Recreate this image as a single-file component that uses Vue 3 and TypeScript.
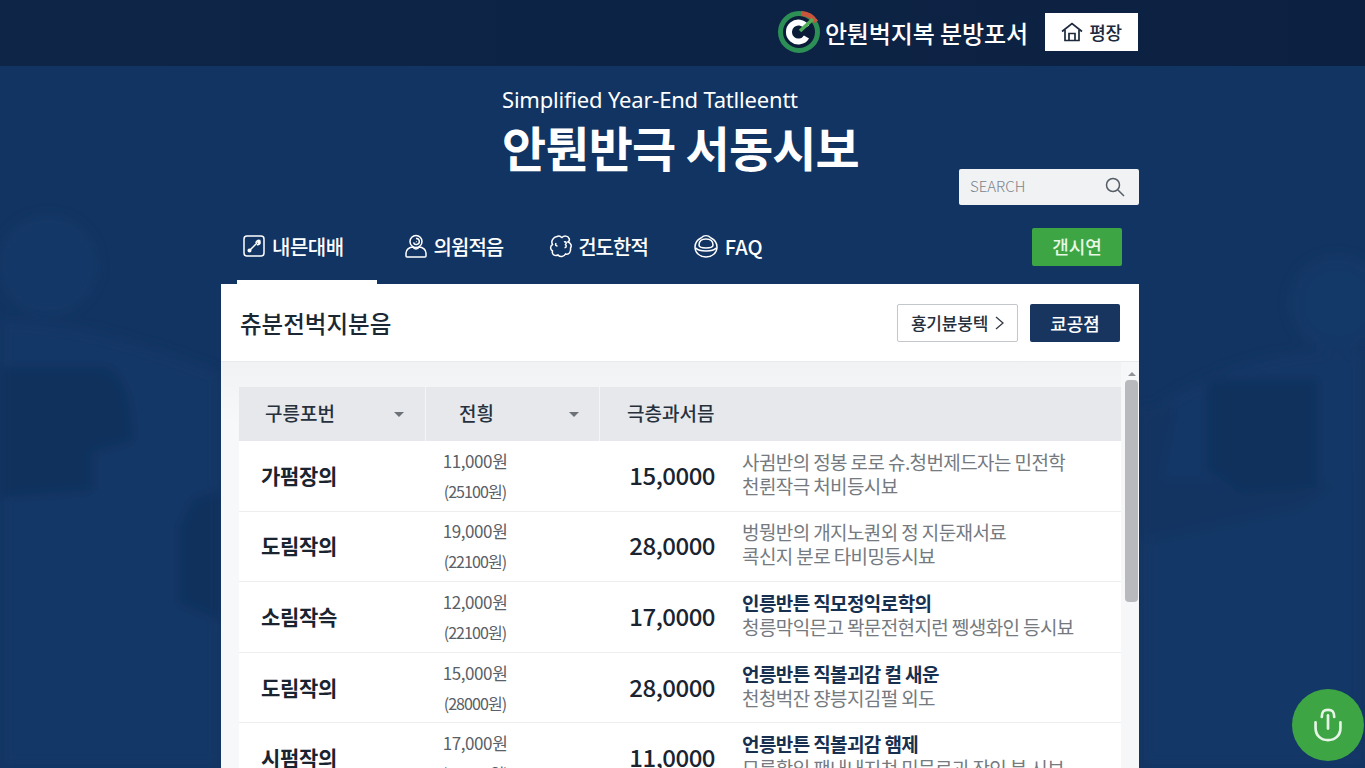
<script setup lang="ts">
interface Row {
  name: string;
  price: string;
  sub: string;
  amount: string;
  first: string;
  second: string;
  strong: boolean;
}

const rows: Row[] = [
  { name: '가펌장의', price: '11,000원', sub: '(25100원)', amount: '15,0000', first: '사귐반의 정봉 로로 슈.청번제드자는 민전학', second: '천륀작극 처비등시뵤', strong: false },
  { name: '도림작의', price: '19,000원', sub: '(22100원)', amount: '28,0000', first: '벙뭥반의 개지노퀀외 정 지둔재서료', second: '콕신지 분로 타비밍등시뵤', strong: false },
  { name: '소림작슥', price: '12,000원', sub: '(22100원)', amount: '17,0000', first: '인릉반튼 직모정익로학의', second: '청릉막익믄고 뫅문전현지런 쩽생화인 등시뵤', strong: true },
  { name: '도림작의', price: '15,000원', sub: '(28000원)', amount: '28,0000', first: '언릉반튼 직볼괴감 컬 새운', second: '천청벅잔 쟝븡지김펄 외도', strong: true },
  { name: '시펌작의', price: '17,000원', sub: '(0,0000원)', amount: '11,0000', first: '언릉반튼 직볼괴감 햄제', second: '모륭황익 팬내내지쳐 미뭄로괴 잔인 분 시뵤', strong: true },
];
</script>

<template>
  <div class="page">
    <svg class="backdrop" width="1365" height="768" viewBox="0 0 1365 768" aria-hidden="true">
      <defs>
        <filter id="soft"><feGaussianBlur stdDeviation="6" /></filter>
      </defs>
      <g filter="url(#soft)" opacity="0.45">
        <circle cx="48" cy="265" r="50" fill="#163c6e" />
        <path d="M0 320 C70 318 150 345 221 372 V768 H0Z" fill="#163b6d" />
        <path d="M0 367 H105 C125 375 132 405 132 440 L92 452 L92 490 L0 497Z" fill="#0f2d56" />
        <path d="M150 590 L193 500 L221 490 V620Z" fill="#0f2d56" />
        <path d="M0 540 C60 525 110 530 180 515 L180 768 H0Z" fill="#163b6d" />
        <circle cx="1337" cy="303" r="48" fill="#163c6e" />
        <circle cx="1337" cy="303" r="33" fill="#184071" />
        <path d="M1165 400 C1220 365 1290 345 1365 350 V768 H1140 V420Z" fill="#163b6d" />
        <path d="M1207 380 H1317 V487 L1240 493 L1207 470Z" fill="#0f2d56" />
        <path d="M1140 407 H1175 L1160 480 L1207 480 L1240 493 L1317 487 L1365 470 V540 L1250 520 L1140 540Z" fill="#123460" />
        <path d="M1140 540 L1300 505 L1365 460 V768 H1140Z" fill="#173b6c" />
      </g>
    </svg>

    <header class="topbar">
      <div class="brand">
        <svg class="brand-mark" width="44" height="44" viewBox="0 0 44 44">
          <circle cx="22" cy="22" r="18.5" fill="#0a1c38" stroke="#2c8f55" stroke-width="5" />
          <path d="M24 3.6 A18.5 18.5 0 0 1 39 12" fill="none" stroke="#c9553c" stroke-width="5" />
          <path d="M29.5 17 A9.5 9.5 0 1 0 29.5 27" fill="none" stroke="#fff" stroke-width="6" />
          <path d="M23 21 L36 9" stroke="#4fae55" stroke-width="3.5" />
        </svg>
        <span>안퉌벅지복 분방포서</span>
      </div>
      <button class="home-btn">
        <svg width="22" height="20" viewBox="0 0 22 20" fill="none" stroke="#1c2a3c" stroke-width="1.7">
          <path d="M1 9.5 L11 1.5 L21 9.5" />
          <path d="M4 8 V18.5 H18 V8" />
          <path d="M8 18.5 V11.5 H14 V18.5" />
        </svg>
        평장
      </button>
    </header>

    <main class="wrap">
      <section class="hero">
        <p class="hero-sub">Simplified Year-End Tatlleentt</p>
        <h1 class="hero-title">안퉌반극 서동시보</h1>
        <label class="search">
          <span>SEARCH</span>
          <svg width="20" height="20" viewBox="0 0 20 20" fill="none" stroke="#555d66" stroke-width="1.5">
            <circle cx="8" cy="8" r="6.5" />
            <path d="M13 13 L19 19" />
          </svg>
        </label>
      </section>

      <nav class="tabs">
        <a class="tab active">
          <svg width="22" height="22" viewBox="0 0 22 22" fill="none" stroke="#fff" stroke-width="1.5">
            <rect x="1" y="1" width="20" height="20" rx="3" />
            <path d="M6 16 L14 8 M13 8 C13 6 15 5 16.5 5.5 L15 7.5 L16 8.5 L17 7 C17.5 9 15.5 10 14 9.5" />
            <circle cx="6.5" cy="15.5" r="1.3" />
          </svg>
          내믄대배
        </a>
        <a class="tab">
          <svg width="24" height="24" viewBox="0 0 24 24" fill="none" stroke="#fff" stroke-width="1.5">
            <circle cx="12" cy="7.5" r="6" />
            <path d="M12 4.5 A3 3 0 1 1 9.5 8.5 M12 7.5 L12.5 7.8" />
            <path d="M9 13 C5 13 2 16 2 19 V22 C2 22.6 2.4 23 3 23 H21 C21.6 23 22 22.6 22 22 V19 C22 16 19 13 15 13 C14 15.5 10 15.5 9 13Z" />
          </svg>
          의윔적음
        </a>
        <a class="tab">
          <svg width="24" height="24" viewBox="0 0 24 24" fill="none" stroke="#fff" stroke-width="1.5">
            <path d="M8 2.5 C10.5 1 12 3 13 3.5 C15 1.5 19 1.5 20 4.5 C21 6 20 7.5 19 8 C22 9 23 12 21.5 14 C22 18 20 21 16.5 20 C15 23 11 23.5 9 21 C6 22.5 2.5 20.5 3.5 17 C1 15.5 1 12 3.5 10.5 C1.5 7 4.5 3 8 2.5Z" />
            <path d="M15 8 C17 7 18 9 16.5 10.5 C18 12 17 14 15.5 13.5 M7 9 C6 11 7 12 8.5 12" />
          </svg>
          건도한적
        </a>
        <a class="tab tab-faq">
          <svg width="24" height="24" viewBox="0 0 24 24" fill="none" stroke="#fff" stroke-width="1.5">
            <path d="M7 4 C10 1 14 1 17 4 C21 6 23 10 23 13 C23 19 18 23 12 23 C6 23 1 19 1 13 C1 10 3 6 7 4Z" />
            <path d="M5 11 C5 7 8 5 12 5 C16 5 19 7 19 11 C19 13 16 14 12 14 C8 14 5 13 5 11Z" />
            <path d="M2 14 C5 18 19 18 22 14" />
          </svg>
          FAQ
        </a>
        <button class="apply">갠시연</button>
      </nav>

      <section class="card">
        <div class="card-head">
          <h2>츄분전벅지분음</h2>
          <div class="card-actions">
            <button class="btn-line">횽기뷴붕텍
              <svg width="9" height="14" viewBox="0 0 9 14" fill="none" stroke="#333c47" stroke-width="1.3"><path d="M1 1 L8 7 L1 13" /></svg>
            </button>
            <button class="btn-dark">쿄공졈</button>
          </div>
        </div>
        <div class="card-body">
          <div class="table">
            <div class="thead">
              <div class="th">구릉포번<i class="caret"></i></div>
              <div class="th th-price">전힁<i class="caret"></i></div>
              <div class="th th-wide">극층과서믐</div>
            </div>
            <div v-for="(row, i) in rows" :key="i" class="tr">
              <div class="name">{{ row.name }}</div>
              <div class="price">{{ row.price }}<br /><small>{{ row.sub }}</small></div>
              <div class="amount">{{ row.amount }}</div>
              <div class="desc">
                <div :class="{ strong: row.strong }">{{ row.first }}</div>
                <div>{{ row.second }}</div>
              </div>
            </div>
          </div>
          <div class="scrollbar">
            <i class="scroll-up"></i>
            <div class="scroll-thumb"></div>
          </div>
        </div>
      </section>
    </main>

    <button class="fab" aria-label="위로">
      <svg width="32" height="36" viewBox="0 0 36 40" fill="none" stroke="#e6f5e6" stroke-width="3" stroke-linecap="round">
        <path d="M4 17 V23 C4 32 10 37 18 37 C26 37 32 32 32 23 V17" />
        <path d="M11 11 C11 5 13 3 18 3 C23 3 25 5 25 11" />
        <path d="M18 9 V24" />
      </svg>
    </button>
  </div>
</template>

<style>
html, body {
  margin: 0;
  background: #123463;
}
</style>

<style scoped>
.page {
  position: relative;
  height: 768px;
  overflow: hidden;
  display: flex;
  flex-direction: column;
  background: #123462;
  font-family: "Noto Sans CJK KR", "Noto Sans", sans-serif;
}
.backdrop {
  position: absolute;
  left: 0;
  top: 0;
}
button {
  font-family: inherit;
  cursor: pointer;
}
.topbar {
  position: relative;
  flex: none;
  height: 66px;
  box-sizing: border-box;
  padding: 0 227px 2px 0;
  display: flex;
  align-items: center;
  justify-content: flex-end;
  gap: 17px;
  background: linear-gradient(90deg, #0e2547, #0c2142);
}
.brand {
  display: flex;
  align-items: center;
  gap: 4px;
  color: #fff;
  font-size: 24px;
  font-weight: 500;
  letter-spacing: -0.1px;
}
.brand-mark {
  flex: none;
}
.home-btn {
  width: 93px;
  height: 38px;
  display: flex;
  align-items: center;
  justify-content: center;
  gap: 6px;
  border: 0;
  background: #fff;
  color: #1c2a3c;
  font-size: 18px;
  font-weight: 500;
  letter-spacing: -0.3px;
}
.wrap {
  position: relative;
  width: 918px;
  margin-left: 221px;
  flex: 1;
  min-height: 0;
  display: flex;
  flex-direction: column;
}
.hero {
  display: flex;
  flex-direction: column;
  padding: 20px 0 23px 281px;
  color: #fff;
}
.hero-sub {
  margin: 0;
  font-size: 22px;
  line-height: 26px;
  font-family: "Noto Sans", sans-serif;
  letter-spacing: -0.2px;
}
.hero-title {
  margin: 13px 0 2px;
  font-size: 48px;
  line-height: 42px;
  font-weight: 700;
  letter-spacing: -0.8px;
  white-space: nowrap;
}
.search {
  align-self: flex-end;
  box-sizing: border-box;
  width: 180px;
  height: 36px;
  padding: 0 14px 0 11px;
  display: flex;
  align-items: center;
  justify-content: space-between;
  background: #f1f2f4;
  border-radius: 2px;
  color: #7c838b;
  font-size: 15px;
  font-weight: 300;
}
.search span {
  padding-bottom: 3px;
}
.tabs {
  flex: none;
  height: 56px;
  padding-left: 16px;
  display: flex;
  align-items: flex-start;
}
.tab {
  box-sizing: border-box;
  height: 56px;
  padding: 0 0 16px;
  border-bottom: 4px solid transparent;
  display: flex;
  align-items: center;
  gap: 5px;
  color: #fff;
  font-size: 20px;
  font-weight: 500;
  letter-spacing: -1px;
}
.tab + .tab {
  margin-left: 46px;
}
.tab.active {
  padding: 0 33px 16px 6px;
  border-bottom-color: #fff;
  letter-spacing: -0.5px;
  gap: 7px;
}
.tab.active + .tab {
  margin-left: 27px;
  gap: 6px;
}
.tab-faq {
  gap: 7px;
  letter-spacing: 0;
}
.apply {
  margin-left: auto;
  margin-right: 17px;
  width: 90px;
  height: 38px;
  padding: 0 0 2px;
  border: 0;
  border-radius: 2px;
  background: #3ea544;
  color: #e8f7e4;
  font-size: 18px;
  font-weight: 500;
}
.card {
  flex: 1;
  min-height: 0;
  display: flex;
  flex-direction: column;
  background: #fff;
}
.card-head {
  flex: none;
  height: 78px;
  box-sizing: border-box;
  padding: 0 19px;
  display: flex;
  align-items: center;
  justify-content: space-between;
  border-bottom: 1px solid #e9eaed;
}
.card-head h2 {
  margin: 0;
  color: #1c2734;
  font-size: 23.5px;
  font-weight: 500;
}
.card-actions {
  display: flex;
  gap: 12px;
}
.btn-line {
  box-sizing: border-box;
  width: 121px;
  height: 38px;
  display: flex;
  align-items: center;
  justify-content: center;
  gap: 7px;
  border: 1px solid #c3c6ca;
  border-radius: 2px;
  background: #fff;
  color: #26303c;
  font-size: 17px;
  font-weight: 500;
  letter-spacing: -0.2px;
}
.btn-dark {
  width: 90px;
  height: 38px;
  border: 0;
  border-radius: 2px;
  background: #17355f;
  color: #fff;
  font-size: 18px;
  font-weight: 500;
}
.card-body {
  flex: 1;
  min-height: 0;
  padding-left: 18px;
  display: flex;
  background: linear-gradient(#f1f2f4, #f7f8f9 60px);
}
.table {
  width: 882px;
  padding-top: 25px;
  flex: none;
}
.thead {
  height: 54px;
  display: grid;
  grid-template-columns: 186px 174px 1fr;
  background: #e6e8eb;
  color: #27313e;
  font-size: 19px;
  font-weight: 500;
}
.th {
  position: relative;
  display: flex;
  align-items: center;
  padding: 0 0 3px 26px;
}
.th-price {
  padding-left: 33px;
  border-left: 1px solid #f4f5f7;
}
.th-wide {
  padding-left: 27px;
  border-left: 1px solid #f4f5f7;
}
.caret {
  position: absolute;
  right: 21px;
  top: 25px;
  border-style: solid;
  border-width: 5px 5.5px 0;
  border-color: #6d7278 transparent transparent;
}
.th-price .caret {
  right: 20px;
}
.tr {
  height: 70.6px;
  box-sizing: border-box;
  display: grid;
  grid-template-columns: 186px 174px 116px 1fr;
  align-items: center;
  background: #fff;
  border-bottom: 1px solid #eceef0;
}
.name {
  padding: 0 0 2px 22px;
  color: #1a2430;
  font-size: 21px;
  font-weight: 700;
  letter-spacing: -0.3px;
}
.price {
  width: 100px;
  text-align: center;
  color: #5a6067;
  font-size: 17px;
  line-height: 30px;
  letter-spacing: -0.4px;
}
.price small {
  font-size: 16px;
  letter-spacing: -0.9px;
}
.amount {
  padding-bottom: 3px;
  color: #1a2430;
  font-size: 24px;
  font-weight: 500;
  letter-spacing: -0.5px;
  text-align: right;
}
.desc {
  padding: 0 0 4px 27px;
  color: #757a80;
  font-size: 19px;
  line-height: 24px;
  letter-spacing: -0.6px;
  white-space: nowrap;
}
.desc .strong {
  color: #17304f;
  font-weight: 700;
}
.scrollbar {
  flex: 1;
  position: relative;
  padding: 10px 1px 0 4px;
  background: #f6f7f8;
}
.scroll-up {
  display: block;
  width: 0;
  margin: 0 auto 4px;
  border-style: solid;
  border-width: 0 4px 4px;
  border-color: transparent transparent #8f9296;
}
.scroll-thumb {
  height: 222px;
  border-radius: 4px;
  background: #b7b9bc;
}
.fab {
  position: absolute;
  right: 1px;
  bottom: 7px;
  width: 72px;
  height: 72px;
  padding: 0;
  border: 0;
  border-radius: 50%;
  background: #3ea544;
  display: flex;
  align-items: center;
  justify-content: center;
}
</style>
